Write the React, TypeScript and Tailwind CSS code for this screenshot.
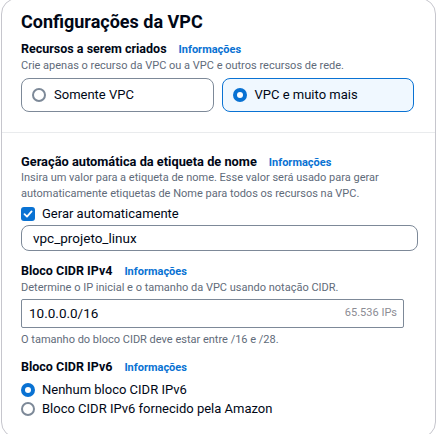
import React, { useState } from 'react';

const font = { fontFamily: 'Roboto, "Noto Sans", Arial, sans-serif' };

const Info = () => (
  <span className="ml-3 text-[11px] font-bold text-[#0972d3]">Informações</span>
);

const Radio = ({ checked }: { checked: boolean }) =>
  checked ? (
    <span className="flex h-[14px] w-[14px] shrink-0 items-center justify-center rounded-full bg-[#0972d3]">
      <span className="h-[6px] w-[6px] rounded-full bg-white" />
    </span>
  ) : (
    <span className="h-[14px] w-[14px] shrink-0 rounded-full border-2 border-[#7d8998] bg-white" />
  );

const Tile = ({ label, checked, onClick }: { label: string; checked: boolean; onClick: () => void }) => (
  <button
    onClick={onClick}
    className={`flex h-[34px] items-center gap-2 rounded-lg border pl-[10px] text-left text-[13px] text-[#000716] ${
      checked ? 'border-[#0972d3] bg-[#f0f8ff]' : 'border-[#7d8998] bg-white'
    }`}
  >
    <Radio checked={checked} />
    <span>{label}</span>
  </button>
);

export default function App() {
  const [mode, setMode] = useState<'vpc' | 'more'>('more');
  const [ipv6, setIpv6] = useState<'none' | 'amazon'>('none');

  return (
    <div style={font} className="h-[434px] w-[437px] overflow-hidden bg-white px-px">
      <div className="-mt-[2px] h-[440px] rounded-2xl border border-[#c6c6cd] bg-white">
        <div className="px-[19px] pt-[12px] pb-[20px]">
          <h2 className="text-[18px] font-bold leading-[22px] text-[#000716]">Configurações da VPC</h2>
          <div className="mt-[8px] flex items-baseline text-[12.5px] font-bold leading-[16px] text-[#000716]">
            Recursos a serem criados <Info />
          </div>
          <p className="text-[11px] leading-[15px] text-[#5f6b7a]">
            Crie apenas o recurso da VPC ou a VPC e outros recursos de rede.
          </p>
          <div className="mt-[5px] grid w-[393px] grid-cols-2 gap-2">
            <Tile label="Somente VPC" checked={mode === 'vpc'} onClick={() => setMode('vpc')} />
            <Tile label="VPC e muito mais" checked={mode === 'more'} onClick={() => setMode('more')} />
          </div>
        </div>

        <div className="border-t border-[#e9ebed] px-[19px] pt-[21px]">
          <div className="flex items-baseline text-[12.8px] font-bold leading-[15px] text-[#000716]">
            Geração automática da etiqueta de nome <Info />
          </div>
          <p className="text-[11px] leading-[16px] text-[#5f6b7a]">
            Insira um valor para a etiqueta de nome. Esse valor será usado para gerar automaticamente etiquetas de Nome
            para todos os recursos na VPC.
          </p>
          <label className="mt-[3px] flex items-center gap-[7px] text-[13px] leading-[18px] text-[#000716]">
            <span className="flex h-[14px] w-[14px] items-center justify-center rounded-[3px] bg-[#0972d3]">
              <svg width="10" height="10" viewBox="0 0 10 10" fill="none">
                <path d="M1.5 5.2 4 7.6 8.6 2.4" stroke="white" strokeWidth="1.8" strokeLinecap="round" strokeLinejoin="round" />
              </svg>
            </span>
            Gerar automaticamente
          </label>
          <div className="mt-[2px] flex h-[26px] w-[397px] items-center rounded-lg border border-[#7d8998] px-[11px] text-[13.5px] text-[#000716]">
            vpc_projeto_linux
          </div>

          <div className="mt-[12px] flex items-baseline text-[12.5px] font-bold leading-[16px] text-[#000716]">
            Bloco CIDR IPv4 <Info />
          </div>
          <p className="text-[11px] leading-[15px] text-[#5f6b7a]">
            Determine o IP inicial e o tamanho da VPC usando notação CIDR.
          </p>
          <div className="mt-[4px] flex h-[29px] w-[383px] items-center justify-between rounded-[2px] border border-[#7d8998] pr-[6px] pl-[7px]">
            <span className="text-[13.5px] text-[#000716]">10.0.0.0/16</span>
            <span className="text-[11px] text-[#8c8c94]">65.536 IPs</span>
          </div>
          <p className="mt-[4px] text-[11px] leading-[15px] text-[#5f6b7a]">
            O tamanho do bloco CIDR deve estar entre /16 e /28.
          </p>

          <div className="mt-[12px] flex items-baseline text-[12.5px] font-bold leading-[16px] text-[#000716]">
            Bloco CIDR IPv6 <Info />
          </div>
          <div className="mt-[4px] flex flex-col">
            <button onClick={() => setIpv6('none')} className="flex h-[19px] items-center gap-[7px] text-[13px] text-[#000716]">
              <Radio checked={ipv6 === 'none'} />
              Nenhum bloco CIDR IPv6
            </button>
            <button onClick={() => setIpv6('amazon')} className="flex h-[19px] items-center gap-[7px] text-[13px] text-[#000716]">
              <Radio checked={ipv6 === 'amazon'} />
              Bloco CIDR IPv6 fornecido pela Amazon
            </button>
          </div>
        </div>
      </div>
    </div>
  );
}
